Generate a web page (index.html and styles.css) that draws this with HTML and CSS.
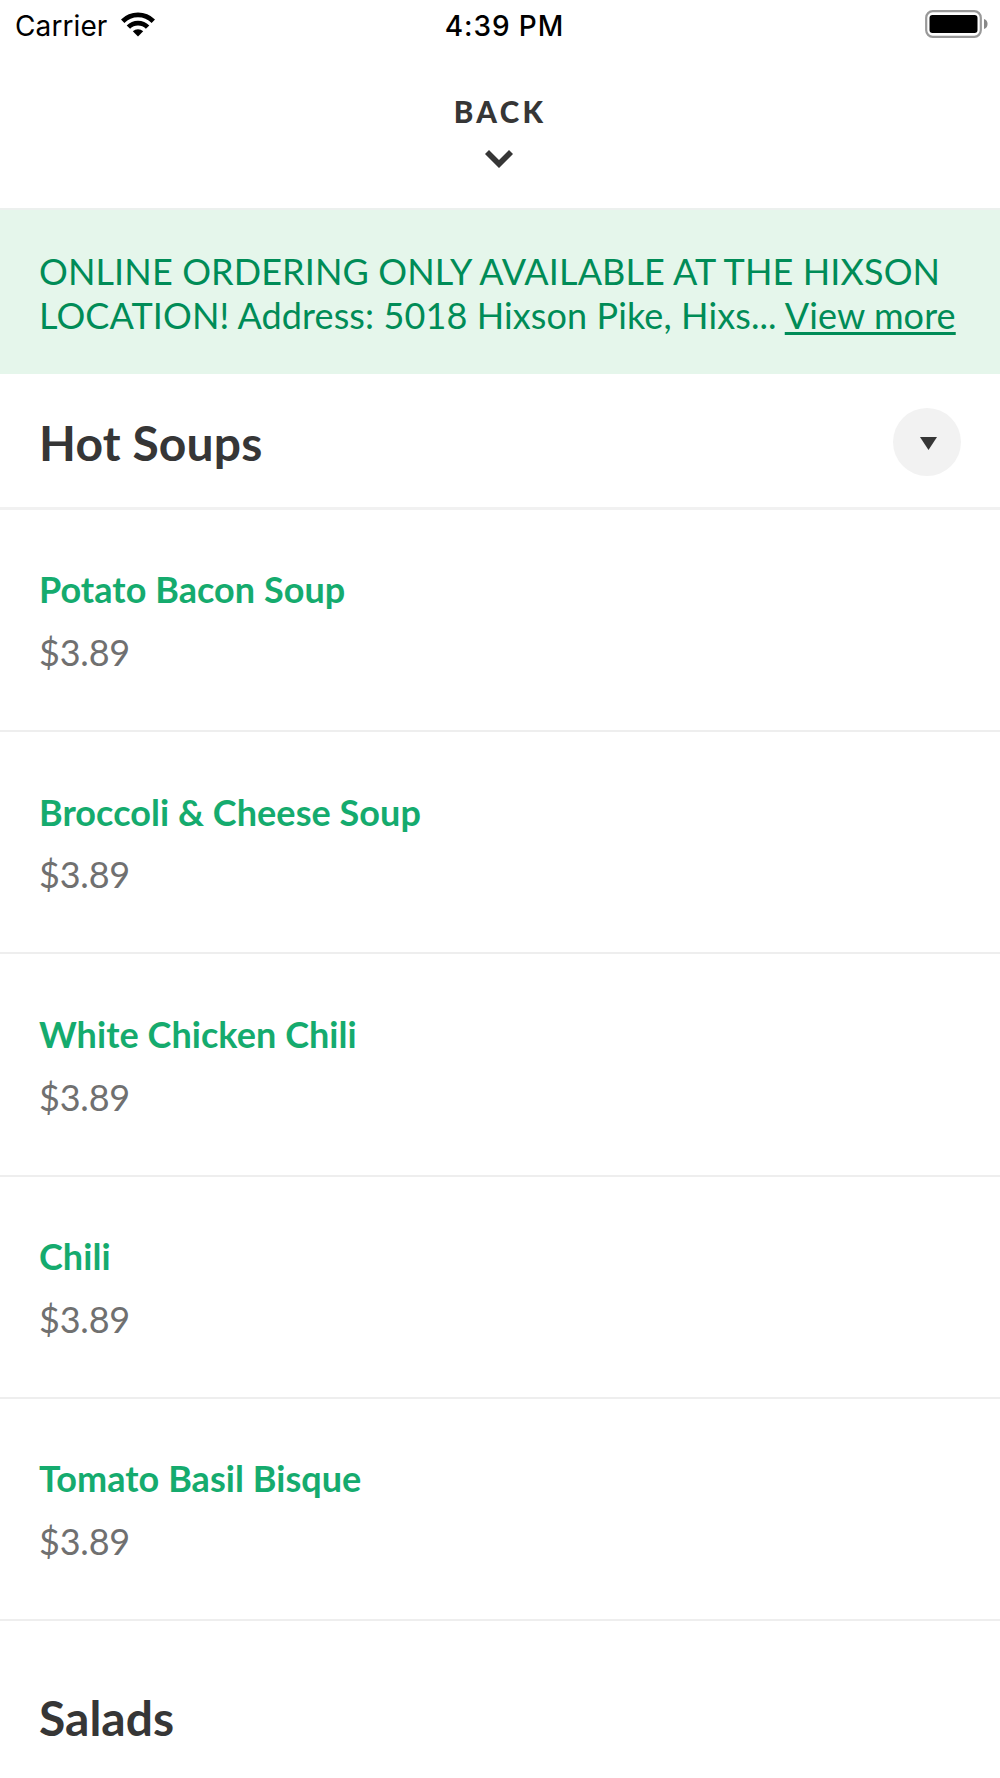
FILE: index.html
```html
<!DOCTYPE html>
<html lang="en">
<head>
<meta charset="utf-8">
<title>Menu</title>
<link rel="stylesheet" href="styles.css">
</head>
<body>
<div class="status">
  <div class="carrier"><span>Carrier</span>
    <svg class="wifi" width="34" height="25" viewBox="0 0 34 25"><g fill="none" stroke="#000" stroke-width="4.800"><path d="M1.700 9.200a21.800 21.800 0 0 1 30.600 0"/><path d="M7.400 15.100a13.500 13.500 0 0 1 19.200 0"/></g><path d="M17 24.500l-5.200-5.200a7.500 7.500 0 0 1 10.400 0z"/></svg>
  </div>
  <div class="time">4:39 PM</div>
  <svg class="battery" width="63" height="28" viewBox="0 0 63 28"><rect x="1.200" y="1.200" width="54.600" height="25.600" rx="6.500" fill="none" stroke="#999" stroke-width="2.200"/><rect x="4.500" y="5" width="48" height="18" rx="3"/><path d="M59 9a5.300 5.300 0 0 1 0 10z" fill="#888"/></svg>
</div>
<header class="back">
  <span class="back-label">BACK</span>
  <svg class="chevron" width="28" height="18" viewBox="0 0 28 18"><path d="M4 0l10 10L24 0l4 4-14 14L0 4z" fill="#363636"/></svg>
</header>
<section class="notice">
  <div>ONLINE ORDERING ONLY AVAILABLE AT THE HIXSON</div>
  <div>LOCATION! Address: 5018 Hixson Pike, Hixs... <a class="more">View more</a></div>
</section>
<main>
  <div class="category"><h2>Hot Soups</h2><div class="toggle"><svg width="17" height="13" viewBox="0 0 17 13"><path d="M0 0h17L8.500 13z" fill="#363636"/></svg></div></div>
  <div class="item"><h3>Potato Bacon Soup</h3><p>$3.89</p></div>
  <div class="item"><h3>Broccoli &amp; Cheese Soup</h3><p>$3.89</p></div>
  <div class="item"><h3>White Chicken Chili</h3><p>$3.89</p></div>
  <div class="item"><h3>Chili</h3><p>$3.89</p></div>
  <div class="item"><h3>Tomato Basil Bisque</h3><p>$3.89</p></div>
  <div class="next"><h2>Salads</h2></div>
</main>
</body>
</html>
```

FILE: styles.css
```css
* { box-sizing: border-box; margin: 0; padding: 0; }
body { width: 1000px; height: 1778px; overflow: hidden; background: #fff; font-family: Lato, sans-serif; color: #363636; }
.status { height: 50px; padding: 0 12px 0 15px; display: grid; grid-template-columns: 1fr auto 1fr; align-items: center; font-family: Inter, sans-serif; font-size: 28px; color: #000; }
.carrier { display: flex; align-items: center; gap: 14px; padding-top: 1px; letter-spacing: 0.1px; }
.wifi { margin-top: -2px; }
.time { padding: 1px 0 0 6px; font-weight: 500; letter-spacing: 0.9px; }
.battery { justify-self: end; margin-top: -2px; }
.back { height: 160px; padding: 43px 3px 0 0; display: flex; flex-direction: column; align-items: center; border-bottom: 2px solid #ecf0ee; }
.back-label { padding-left: 3px; font-size: 29.500px; line-height: 38px; font-weight: 900; letter-spacing: 3.300px; }
.chevron { margin-top: 19px; }
.notice { height: 164px; padding: 39px 39px 0; background: #e5f6eb; color: #008c57; font-size: 36px; line-height: 44px; letter-spacing: 0.110px; white-space: nowrap; }
.more { text-decoration: underline; text-decoration-thickness: 2.500px; text-underline-offset: 3px; text-decoration-skip-ink: none; }
.category { height: 136px; padding: 3px 39px 0; display: flex; align-items: center; justify-content: space-between; border-bottom: 3px solid #f1f1f1; }
h2 { font-size: 48px; line-height: 58px; font-weight: 700; letter-spacing: 0.150px; }
.category h2 { padding-top: 2px; }
.toggle { width: 68px; height: 68px; padding: 2px 0 0 2px; border-radius: 50%; background: #f2f2f2; display: flex; align-items: center; justify-content: center; }
.item { height: 222.200px; padding: 57.400px 39px 0; border-bottom: 2px solid #eee; }
h3 { font-size: 36px; line-height: 44px; font-weight: 700; letter-spacing: 0.050px; color: #15ab6e; }
.item p { margin-top: 18.800px; font-size: 36px; line-height: 44px; letter-spacing: -0.200px; color: #707070; }
.next { padding: 68px 39px 0; }
.next h2 { letter-spacing: 0; }
```
